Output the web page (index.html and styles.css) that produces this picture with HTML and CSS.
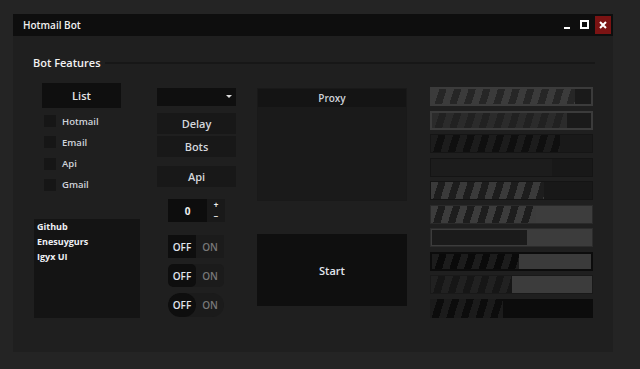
FILE: index.html
```html
<!DOCTYPE html>
<html lang="en">
<head>
    <meta charset="UTF-8">
    <meta name="viewport" content="width=device-width, initial-scale=1.0">
    <title>Hotmail Bot</title>
    <link rel="stylesheet" href="styles.css">
</head>
<body>

<div class="window">
    <div class="titlebar">
        <span class="title">Hotmail Bot</span>
        <div class="controls">
            <span class="ctrl">
                <svg width="8" height="10" viewBox="0 0 8 10"><rect x="1" y="7" width="6" height="2" fill="#fff"/></svg>
            </span>
            <span class="ctrl">
                <svg width="10" height="10" viewBox="0 0 10 10"><rect x="1" y="1" width="7" height="7" fill="none" stroke="#fff" stroke-width="2"/></svg>
            </span>
            <span class="ctrl close">
                <svg width="8" height="8" viewBox="0 0 8 8"><path d="M1 1L7 7M7 1L1 7" stroke="#fff" stroke-width="2"/></svg>
            </span>
        </div>
    </div>

    <div class="content">
        <div class="section-head">
            <span>Bot Features</span>
            <div class="rule"></div>
        </div>

        <div class="row">
            <!-- column 1 -->
            <div class="col col-1">
                <button class="btn-list">List</button>
                <div class="checks">
                    <label class="check"><span class="box"></span>Hotmail</label>
                    <label class="check"><span class="box"></span>Email</label>
                    <label class="check"><span class="box"></span>Api</label>
                    <label class="check"><span class="box"></span>Gmail</label>
                </div>
                <ul class="listbox">
                    <li>Github</li>
                    <li>Enesuygurs</li>
                    <li>Igyx UI</li>
                </ul>
            </div>

            <!-- column 2 -->
            <div class="col col-2">
                <div class="dropdown">
                    <svg width="6" height="4" viewBox="0 0 6 4"><path d="M0 0H6L3 3Z" fill="#ddd"/></svg>
                </div>
                <button class="btn-flat btn-delay">Delay</button>
                <button class="btn-flat btn-bots">Bots</button>
                <button class="btn-flat btn-api">Api</button>
                <div class="numeric">
                    <span class="num-value">0</span>
                    <span class="num-arrows"><span>+</span><span>&minus;</span></span>
                </div>
                <div class="toggle t-square"><span class="off">OFF</span><span class="on">ON</span></div>
                <div class="toggle t-round"><span class="off">OFF</span><span class="on">ON</span></div>
                <div class="toggle t-pill"><span class="off">OFF</span><span class="on">ON</span></div>
            </div>

            <!-- column 3 -->
            <div class="col col-3">
                <div class="proxy">
                    <div class="proxy-head">Proxy</div>
                    <div class="proxy-body"></div>
                </div>
                <button class="btn-start">Start</button>
            </div>

            <!-- column 4 -->
            <div class="col col-4">
                <div class="bar b1"><div class="fill" style="width: 90%"></div></div>
                <div class="bar b2"><div class="fill" style="width: 85%"></div></div>
                <div class="bar b3"><div class="fill" style="width: 80%"></div></div>
                <div class="bar b4"><div class="fill" style="width: 75%"></div></div>
                <div class="bar b5"><div class="fill" style="width: 70%"></div></div>
                <div class="bar b6"><div class="fill" style="width: 65%"></div></div>
                <div class="bar b7"><div class="fill" style="width: 60%"></div></div>
                <div class="bar b8"><div class="fill" style="width: 55%"></div></div>
                <div class="bar b9"><div class="fill" style="width: 50%"></div></div>
                <div class="bar b10"><div class="fill" style="width: 45%"></div></div>
            </div>
        </div>
    </div>
</div>

</body>
</html>
```

FILE: styles.css
```css
body {
    margin: 0;
    padding: 14px 0 0 13px;
    background-color: #242424;
    font-family: "Open Sans", "Noto Sans", sans-serif;
    color: #dcdcdc;
}
button {
    font-family: inherit;
    border: none;
    padding: 0;
    cursor: pointer;
}
.window {
    width: 600px;
    height: 338px;
    background-color: #1f1f1f;
    display: flex;
    flex-direction: column;
}
.titlebar {
    height: 22px;
    background-color: #0e0e0e;
    display: flex;
    align-items: center;
    justify-content: space-between;
    padding: 0 2px 0 10px;
}
.title {
    font-size: 10px;
    font-weight: 600;
    color: #f0f0f0;
}
.controls {
    display: flex;
    align-items: center;
    gap: 2px;
}
.ctrl {
    width: 16px;
    height: 18px;
    display: flex;
    align-items: center;
    justify-content: center;
}
.close {
    background-color: #7b1313;
}
.content {
    padding: 18px 18px 0 20px;
}
.section-head {
    display: flex;
    align-items: center;
    height: 16px;
    font-size: 11px;
    font-weight: 600;
    color: #f2f2f2;
}
.rule {
    flex: 1;
    height: 2px;
    background-color: #171717;
    margin: 2px 0 0 4px;
}
.row {
    display: flex;
    margin-top: 13px;
    margin-left: 1px;
}
.col {
    display: flex;
    flex-direction: column;
}
.col-1 {
    width: 106px;
}
.col-2 {
    width: 79px;
    margin-left: 17px;
    padding-top: 5px;
}
.col-3 {
    width: 150px;
    margin-left: 21px;
    padding-top: 5px;
}
.col-4 {
    width: 163px;
    margin-left: 23px;
    padding-top: 4px;
    gap: 4.5px;
}

/* column 1 */
.btn-list {
    width: 79px;
    height: 25px;
    margin-left: 8px;
    background-color: #0f0f0f;
    color: #e6e6e6;
    font-size: 11px;
    font-weight: 600;
}
.checks {
    display: flex;
    flex-direction: column;
    gap: 9.3px;
    margin: 7px 0 0 10px;
}
.check {
    display: flex;
    align-items: center;
    height: 12px;
    font-size: 9.5px;
    font-weight: 600;
    color: #cfd3da;
}
.box {
    width: 12px;
    height: 12px;
    background-color: #161616;
    margin-right: 6px;
}
.listbox {
    list-style: none;
    margin: 28px 0 0 0;
    padding: 0 3px;
    height: 99px;
    background-color: #141414;
}
.listbox li {
    font-size: 9px;
    font-weight: 700;
    color: #eef0f4;
    line-height: 15px;
}

/* column 2 */
.dropdown {
    height: 18px;
    background-color: #0f0f0f;
    display: flex;
    align-items: center;
    justify-content: flex-end;
    padding-right: 4px;
}
.btn-flat {
    height: 21px;
    background-color: #181818;
    color: #d4d7dc;
    font-size: 11px;
    font-weight: 600;
}
.btn-delay {
    margin-top: 7px;
}
.btn-bots {
    margin-top: 2px;
}
.btn-api {
    margin-top: 9px;
}
.numeric {
    display: flex;
    width: 57px;
    height: 23px;
    margin: 12px 0 0 11px;
}
.num-value {
    width: 39px;
    background-color: #0d0d0d;
    display: flex;
    align-items: center;
    justify-content: center;
    font-size: 10px;
    font-weight: 700;
    color: #f0f0f0;
}
.num-arrows {
    flex: 1;
    background-color: #191919;
    display: flex;
    flex-direction: column;
    align-items: center;
    justify-content: center;
    gap: 1px;
    font-size: 8px;
    font-weight: 700;
    color: #f0f0f0;
}
.num-arrows span {
    line-height: 10px;
}
.toggle {
    display: flex;
    width: 56px;
    height: 23px;
    margin: 13px 0 0 11px;
    background-color: #1b1b1b;
    overflow: hidden;
    font-size: 10px;
    font-weight: 600;
}
.toggle span {
    flex: 1;
    display: flex;
    align-items: center;
    justify-content: center;
}
.toggle .off {
    background-color: #0e0e0e;
    color: #e2e6ee;
}
.toggle .on {
    color: #787878;
}
.t-round {
    margin-top: 6px;
    border-radius: 5px;
}
.t-round .off {
    border-radius: 5px;
}
.t-pill {
    margin-top: 6px;
    height: 24px;
    border-radius: 12px;
}
.t-pill .off {
    border-radius: 12px;
}

/* column 3 */
.proxy {
    height: 113px;
    display: flex;
    flex-direction: column;
    background-color: #1a1a1a;
    border: 1px solid #191919;
    box-sizing: border-box;
}
.proxy-head {
    height: 18px;
    background-color: #141414;
    display: flex;
    align-items: center;
    justify-content: center;
    font-size: 10px;
    font-weight: 600;
    color: #cfd3da;
}
.btn-start {
    height: 72px;
    margin-top: 33px;
    background-color: #0f0f0f;
    color: #e2e6ee;
    font-size: 11px;
    font-weight: 600;
}

/* column 4: progress bars */
.bar {
    height: 19px;
    box-sizing: border-box;
    display: flex;
}
.fill {
    height: 100%;
}
.b1 {
    border: 2px solid #3b3b3b;
    background-color: #1a1a1a;
}
.b1 .fill {
    background: repeating-linear-gradient(107deg, #3b3b3b 0 7px, #262626 7px 14px);
}
.b2 {
    border: 2px solid #3b3b3b;
    background-color: #1a1a1a;
}
.b2 .fill {
    background: repeating-linear-gradient(107deg, #2b2b2b 0 7px, #212121 7px 14px);
}
.b3 {
    border: 1px solid #151515;
    background-color: #191919;
}
.b3 .fill {
    background: repeating-linear-gradient(107deg, #1c1c1c 0 7px, #0f0f0f 7px 14px);
}
.b4 {
    border: 1px solid #141414;
    background-color: #181818;
}
.b4 .fill {
    background-color: #1c1c1c;
}
.b5 {
    border: 1px solid #141414;
    background-color: #181818;
}
.b5 .fill {
    background: repeating-linear-gradient(107deg, #3a3a3a 0 7px, #1d1d1d 7px 14px);
}
.b6 {
    border: 1px solid #2a2a2a;
    background-color: #3d3d3d;
}
.b6 .fill {
    background: repeating-linear-gradient(107deg, #3c3c3c 0 7px, #1d1d1d 7px 14px);
}
.b7 {
    border: 1px solid #2c2c2c;
    background-color: #3c3c3c;
    padding: 1px;
}
.b7 .fill {
    background-color: #1b1b1b;
}
.b8 {
    border: 2px solid #0c0c0c;
    background-color: #3b3b3b;
}
.b8 .fill {
    background: repeating-linear-gradient(107deg, #1c1c1c 0 7px, #0a0a0a 7px 14px);
}
.b9 {
    border: 1px solid #191919;
    background-color: #3c3c3c;
}
.b9 .fill {
    background: repeating-linear-gradient(107deg, #212121 0 7px, #161616 7px 14px);
}
.b10 {
    background-color: #0c0c0c;
}
.b10 .fill {
    background: repeating-linear-gradient(107deg, #1b1b1b 0 7px, #0c0c0c 7px 14px);
}
```
